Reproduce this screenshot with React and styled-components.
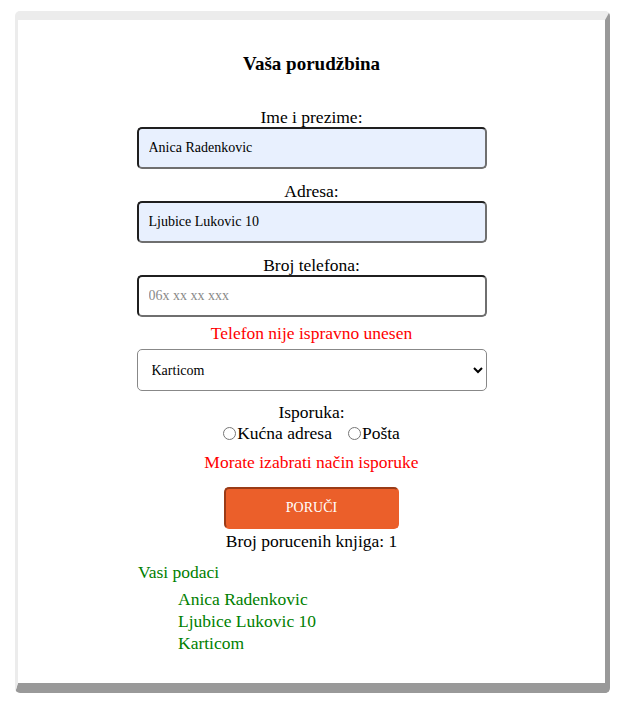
import React from 'react'
import styled, { createGlobalStyle } from 'styled-components'

const GlobalStyle = createGlobalStyle`
    body {
        margin: 0;
        background: #fff;
        font-family: "Liberation Serif", "Times New Roman", serif;
        color: #000;
    }
`;

function App() {
    return (
        <>
            <GlobalStyle />
            <Page>
                <Card>
                    <Title>Vaša porudžbina</Title>
                    <Form onSubmit={e => e.preventDefault()}>
                        <FieldLabel $gap={0}>Ime i prezime:</FieldLabel>
                        <TextInput $filled defaultValue="Anica Radenkovic" />
                        <FieldLabel>Adresa:</FieldLabel>
                        <TextInput $filled defaultValue="Ljubice Lukovic 10" />
                        <FieldLabel>Broj telefona:</FieldLabel>
                        <TextInput placeholder="06x xx xx xxx" />
                        <ErrorText $gap={6}>Telefon nije ispravno unesen</ErrorText>
                        <Select defaultValue="kartica">
                            <option value="kartica">Karticom</option>
                            <option value="pouzece">Pouzećem</option>
                        </Select>
                        <FieldLabel $gap={11}>Isporuka:</FieldLabel>
                        <RadioRow>
                            <RadioLabel>
                                <input type="radio" name="isporuka" />Kućna adresa
                            </RadioLabel>
                            <RadioLabel>
                                <input type="radio" name="isporuka" />Pošta
                            </RadioLabel>
                        </RadioRow>
                        <ErrorText $gap={8}>Morate izabrati način isporuke</ErrorText>
                        <SubmitButton type="submit">PORUČI</SubmitButton>
                        <Count>Broj porucenih knjiga: 1</Count>
                    </Form>
                    <Summary>
                        <SummaryTitle>Vasi podaci</SummaryTitle>
                        <SummaryList>
                            <li>Anica Radenkovic</li>
                            <li>Ljubice Lukovic 10</li>
                            <li>Karticom</li>
                        </SummaryList>
                    </Summary>
                </Card>
            </Page>
        </>
    )
}

const Page = styled.div`
    padding: 11px 7px 12px 15px;
`;

const Card = styled.div`
    box-sizing: border-box;
    width: 595px;
    height: 682px;
    background: #fff;
    border-style: solid;
    border-width: 9px 5px 10px 3px;
    border-color: #ececec #999 #999 #ececec;
    border-radius: 5px;
    padding-top: 32px;
`;

const Title = styled.h2`
    margin: 0;
    text-align: center;
    font-size: 19px;
    line-height: 24px;
    font-weight: 700;
`;

const Form = styled.form`
    display: flex;
    flex-direction: column;
    align-items: center;
    margin-top: 31px;
`;

const FieldLabel = styled.label`
    display: block;
    font-size: 17.5px;
    line-height: 20px;
    margin-top: ${p => p.$gap ?? 12}px;
`;

const TextInput = styled.input`
    box-sizing: border-box;
    width: 350px;
    height: 42px;
    padding: 0 10px;
    border: 2px solid;
    border-color: #1f1f1f #6f6f6f #6f6f6f #1f1f1f;
    border-radius: 5px;
    background: ${p => p.$filled ? '#e8f0fe' : '#fff'};
    font-family: inherit;
    font-size: 14px;
    color: #000;
    outline: none;

    &::placeholder {
        color: #8a8a8a;
    }
`;

const ErrorText = styled.p`
    margin: ${p => p.$gap}px 0 0;
    color: #ff0000;
    font-size: 17.5px;
    line-height: 20px;
    text-align: center;
`;

const Select = styled.select`
    box-sizing: border-box;
    width: 350px;
    height: 42px;
    margin-top: 6px;
    padding: 0 8px 0 10px;
    border: 1px solid #888;
    border-radius: 5px;
    background: #fff;
    font-family: inherit;
    font-size: 14px;
    color: #000;
`;

const RadioRow = styled.div`
    display: flex;
    gap: 16px;
    font-size: 17.5px;
    line-height: 22px;
`;

const RadioLabel = styled.label`
    display: flex;
    align-items: center;

    input {
        width: 13px;
        height: 13px;
        margin: 0 1px 0 0;
    }
`;

const SubmitButton = styled.button`
    box-sizing: border-box;
    width: 175px;
    height: 42px;
    margin-top: 15px;
    border: 2px solid;
    border-color: #9a3b17 #eb5f2a #eb5f2a #9a3b17;
    border-radius: 5px;
    background: #eb5f2a;
    color: #fff;
    font-family: inherit;
    font-size: 14px;
    font-weight: 400;
    cursor: pointer;
`;

const Count = styled.p`
    margin: 2px 0 0;
    font-size: 17.5px;
    line-height: 20px;
`;

const Summary = styled.div`
    margin: 11px 0 0 120px;
    color: #008000;
    font-size: 17.5px;
`;

const SummaryTitle = styled.p`
    margin: 0;
    line-height: 20px;
`;

const SummaryList = styled.ul`
    list-style: none;
    margin: 6px 0 0;
    padding-left: 40px;
    line-height: 22px;
`;

export default App
